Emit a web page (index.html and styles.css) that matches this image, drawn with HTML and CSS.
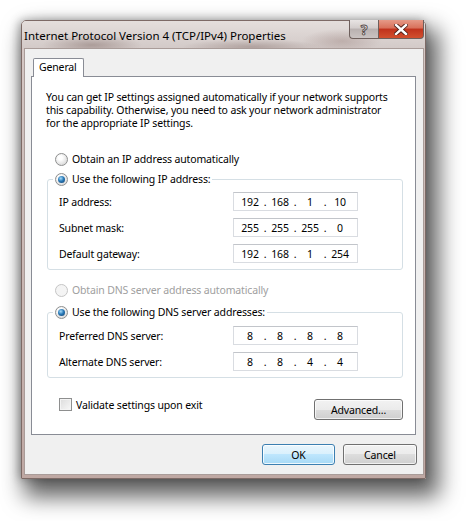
FILE: index.html
```html
<!DOCTYPE html>
<html lang="en">
<head>
    <meta charset="UTF-8">
    <meta name="viewport" content="width=device-width, initial-scale=1.0">
    <title>Internet Protocol Version 4 (TCP/IPv4) Properties</title>
    <link rel="stylesheet" href="styles.css">
</head>
<body>
    <div class="window">
        <div class="titlebar">
            <span class="title">Internet Protocol Version 4 (TCP/IPv4) Properties</span>
            <div class="caption-buttons">
                <span class="cap-btn help">?</span>
                <span class="cap-btn close">
                    <svg width="14" height="11" viewBox="0 0 14 11">
                        <path d="M2 1 L12 10 M12 1 L2 10" stroke="#4a1d16" stroke-width="4.2" stroke-linecap="square"/>
                        <path d="M2 1 L12 10 M12 1 L2 10" stroke="#fff" stroke-width="2.4" stroke-linecap="square"/>
                    </svg>
                </span>
            </div>
        </div>

        <div class="client">
            <div class="tabs">
                <span class="tab">General</span>
            </div>

            <div class="tab-panel">
                <p class="intro">You can get IP settings assigned automatically if your network supports<br>this capability. Otherwise, you need to ask your network administrator<br>for the appropriate IP settings.</p>

                <div class="option"><span class="radio"></span>Obtain an IP address automatically</div>

                <fieldset class="group">
                    <legend class="option"><span class="radio checked"></span>Use the following IP address:</legend>
                    <div class="field-row">
                        <span>IP address:</span>
                        <span class="ip-box"><span>192</span><i>.</i><span>168</span><i>.</i><span>1</span><i>.</i><span>10</span></span>
                    </div>
                    <div class="field-row">
                        <span>Subnet mask:</span>
                        <span class="ip-box"><span>255</span><i>.</i><span>255</span><i>.</i><span>255</span><i>.</i><span>0</span></span>
                    </div>
                    <div class="field-row">
                        <span>Default gateway:</span>
                        <span class="ip-box"><span>192</span><i>.</i><span>168</span><i>.</i><span>1</span><i>.</i><span>254</span></span>
                    </div>
                </fieldset>

                <div class="option dns-auto disabled"><span class="radio"></span>Obtain DNS server address automatically</div>

                <fieldset class="group">
                    <legend class="option"><span class="radio checked"></span>Use the following DNS server addresses:</legend>
                    <div class="field-row">
                        <span>Preferred DNS server:</span>
                        <span class="ip-box"><span>8</span><i>.</i><span>8</span><i>.</i><span>8</span><i>.</i><span>8</span></span>
                    </div>
                    <div class="field-row">
                        <span>Alternate DNS server:</span>
                        <span class="ip-box"><span>8</span><i>.</i><span>8</span><i>.</i><span>4</span><i>.</i><span>4</span></span>
                    </div>
                </fieldset>

                <div class="panel-footer">
                    <div class="check"><span class="checkbox"></span>Validate settings upon exit</div>
                    <button class="btn advanced">Advanced...</button>
                </div>
            </div>

            <div class="dialog-buttons">
                <button class="btn default">OK</button>
                <button class="btn">Cancel</button>
            </div>
        </div>
    </div>
</body>
</html>
```

FILE: styles.css
```css
body {
    margin: 0;
    min-height: 100vh;
    box-sizing: border-box;
    padding: 20px 0 0 21px;
    background: #ffffff;
    font-family: "Noto Sans", "Open Sans", sans-serif;
    font-size: 10.5px;
    letter-spacing: -0.15px;
    color: #000000;
}

.window {
    width: 405px;
    height: 459px;
    box-sizing: border-box;
    border: 1px solid #7d6a66;
    border-radius: 5px 5px 0 0;
    background: linear-gradient(to bottom, #d6c9c6, #bfa8a3);
    box-shadow: 8px 13px 22px 5px rgba(0, 0, 0, 0.62), -2px 0 10px rgba(0, 0, 0, 0.3);
}

/* title bar */

.titlebar {
    height: 27px;
    display: flex;
    justify-content: space-between;
    align-items: flex-start;
    padding-left: 2px;
    border-radius: 4px 4px 0 0;
    background:
        radial-gradient(ellipse 50px 10px at 70px 24px, rgba(110, 85, 80, 0.4), transparent),
        radial-gradient(ellipse 70px 8px at 230px 26px, rgba(110, 85, 80, 0.35), transparent),
        radial-gradient(ellipse 40px 12px at 320px 20px, rgba(130, 100, 95, 0.3), transparent),
        linear-gradient(to bottom, #e4dedc, #d3cac8);
}

.title {
    align-self: center;
    font-size: 11.5px;
    letter-spacing: 0;
    white-space: nowrap;
    margin-top: 1px;
}

.caption-buttons {
    display: flex;
    margin-right: 1px;
    margin-top: -1px;
}

.cap-btn {
    height: 19px;
    box-sizing: border-box;
    display: flex;
    align-items: center;
    justify-content: center;
    border: 1px solid #6e5f5c;
    border-top: none;
}

.help {
    width: 29px;
    border-radius: 0 0 0 4px;
    border-right: none;
    background: linear-gradient(to bottom, #e8e4e3 0%, #d2cccb 45%, #b9b1b0 50%, #cac3c2 100%);
    color: #ffffff;
    font-size: 14px;
    font-weight: bold;
    -webkit-text-stroke: 1px #5a4f4d;
}

.close {
    width: 46px;
    border-radius: 0 0 4px 0;
    background: linear-gradient(to bottom, #e69a87 0%, #d8705a 45%, #c0321c 50%, #d2502f 100%);
}

/* client area */

.client {
    margin: 0 1px 0 2px;
    height: 427px;
    box-sizing: border-box;
    border: 1px solid #a99c99;
    background: #f0f0f0;
    display: flex;
    flex-direction: column;
}

.tabs {
    display: flex;
    padding: 9px 0 0 8px;
}

.tab {
    position: relative;
    z-index: 1;
    height: 19px;
    line-height: 17px;
    box-sizing: border-box;
    padding: 0 6px 0 5px;
    margin-bottom: -1px;
    border: 1px solid #898c95;
    border-bottom: none;
    border-radius: 2px 2px 0 0;
    background: #ffffff;
}

.tab-panel {
    margin: 0 7px 0 6px;
    height: 359px;
    box-sizing: border-box;
    border: 1px solid #898c95;
    background: #ffffff;
    display: flex;
    flex-direction: column;
}

.intro {
    margin: 14px 0 0 14px;
    line-height: 13px;
}

.option {
    display: flex;
    align-items: center;
    gap: 4px;
    height: 20px;
    margin: 19px 0 0 23px;
    white-space: nowrap;
}

.dns-auto {
    margin-top: 10px;
}

.disabled {
    color: #a0a0a0;
}

.radio {
    width: 13px;
    height: 13px;
    box-sizing: border-box;
    border-radius: 50%;
    border: 1px solid #8e8f8f;
    background: radial-gradient(circle at 40% 35%, #ffffff 20%, #d2d2d2 90%);
    display: flex;
    align-items: center;
    justify-content: center;
}

.disabled .radio {
    border-color: #c5c5c5;
    background: #f4f4f4;
}

.radio.checked::after {
    content: "";
    width: 7px;
    height: 7px;
    border-radius: 50%;
    background: radial-gradient(circle at 40% 35%, #a7dcfa 0%, #2a7ab8 45%, #0f3a66 100%);
}

/* group boxes */

.group {
    margin: 0 0 0 15px;
    width: 356px;
    box-sizing: border-box;
    padding: 3px 10px 6px 11px;
    border: 1px solid #d5dfe5;
    border-radius: 3px;
}

.group + .option {
    margin-top: 10px;
}

.option + .group {
    margin-top: 0;
}

.dns-auto + .group {
    margin-top: 2px;
    padding-top: 4px;
}

.group legend.option {
    margin: 0 0 0 -6px;
    padding: 0 2px;
    line-height: 20px;
}

.group .field-row + .field-row {
    margin-top: 7px;
}

.field-row {
    display: grid;
    grid-template-columns: 174px 125px;
    align-items: center;
    height: 19px;
}

.ip-box {
    display: flex;
    height: 19px;
    box-sizing: border-box;
    padding-left: 3px;
    border: 1px solid #d9dce1;
    border-top-color: #c2c5ca;
    align-items: center;
}

.ip-box span {
    width: 26px;
    text-align: center;
}

.ip-box i {
    width: 4px;
    font-style: normal;
    text-align: center;
}

/* footer of tab panel */

.panel-footer {
    display: flex;
    justify-content: space-between;
    align-items: flex-start;
    margin: 20px 12px 0 27px;
}

.check {
    display: flex;
    align-items: center;
    gap: 4px;
    height: 13px;
}

.checkbox {
    width: 13px;
    height: 13px;
    box-sizing: border-box;
    border: 1px solid #8e8f8f;
    background: linear-gradient(135deg, #dcdcdc, #f8f8f8);
    box-shadow: inset 0 0 0 1px #f4f4f4;
}

.btn {
    height: 21px;
    box-sizing: border-box;
    padding: 0;
    font-family: inherit;
    font-size: 10.5px;
    letter-spacing: -0.15px;
    color: #000000;
    border: 1px solid #707070;
    border-radius: 3px;
    background: linear-gradient(to bottom, #f2f2f2 0%, #ebebeb 50%, #dddddd 50%, #cfcfcf 100%);
    box-shadow: inset 0 0 0 1px rgba(255, 255, 255, 0.7);
}

.advanced {
    width: 89px;
    margin-top: 1px;
}

.dialog-buttons {
    display: flex;
    justify-content: flex-end;
    gap: 8px;
    padding: 9px 6px 0 0;
}

.dialog-buttons .btn {
    width: 74px;
}

.btn.default {
    width: 73px;
    border-color: #3c7fb1;
    background: linear-gradient(to bottom, #eaf6fd 0%, #d9f0fc 50%, #bee6fd 50%, #a7d9f5 100%);
    box-shadow: inset 0 0 0 1px rgba(255, 255, 255, 0.8);
}
```
